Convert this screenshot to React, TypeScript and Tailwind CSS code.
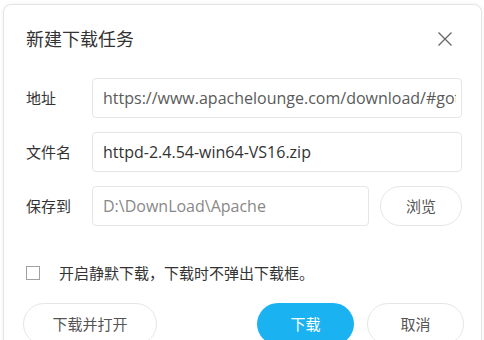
import React from "react";

const cjk = { fontFamily: '"Open Sans", "Noto Sans CJK SC", sans-serif' };

export default function App() {
  return (
    <div className="w-[484px] h-[340px] overflow-hidden bg-white" style={cjk}>
      <div className="ml-[3px] mt-[4px] w-[479px] h-[400px] rounded-[8px] border border-[#e4e4e4] bg-white shadow-[0_0_4px_rgba(0,0,0,0.06)] pl-[22px] pr-[19px] pt-[22px]">
        <div className="flex items-center h-[24px]">
          <div className="text-[18px] leading-[24px] text-[#333]">新建下载任务</div>
          <svg className="ml-auto mr-[9px]" width="16" height="16" viewBox="0 0 16 16">
            <path d="M1.5 1.5 L14.5 14.5 M14.5 1.5 L1.5 14.5" stroke="#666" strokeWidth="1.3" fill="none" />
          </svg>
        </div>
        <div className="mt-[27px] flex flex-col gap-[14px]">
          <div className="flex items-center">
            <div className="w-[66px] shrink-0 text-[15px] text-[#333]">地址</div>
            <div className="flex-1 min-w-0 h-[40px] rounded-[4px] border border-[#e6e6e6] pl-[10px] pr-[5px] flex items-center">
              <div className="flex-1 min-w-0 overflow-hidden whitespace-nowrap text-[16px] text-[#5a5a5a]">
                https://www.apachelounge.com/download/#got
              </div>
            </div>
          </div>
          <div className="flex items-center">
            <div className="w-[66px] shrink-0 text-[15px] text-[#333]">文件名</div>
            <div className="flex-1 min-w-0 h-[40px] rounded-[4px] border border-[#e6e6e6] pl-[10px] flex items-center overflow-hidden whitespace-nowrap text-[16px] text-[#333]">
              httpd-2.4.54-win64-VS16.zip
            </div>
          </div>
          <div className="flex items-center">
            <div className="w-[66px] shrink-0 text-[15px] text-[#333]">保存到</div>
            <div className="w-[277px] h-[40px] rounded-[4px] border border-[#e6e6e6] pl-[10px] flex items-center overflow-hidden whitespace-nowrap text-[16px] text-[#888]">
              D:\DownLoad\Apache
            </div>
            <div className="ml-auto w-[82px] h-[40px] rounded-full border border-[#e6e6e6] flex items-center justify-center text-[15px] text-[#555]">
              浏览
            </div>
          </div>
        </div>
        <div className="mt-[37px] flex items-center h-[20px]">
          <div className="w-[14px] h-[14px] border-[1.5px] border-[#a0a0a0] bg-white"></div>
          <div className="ml-[19px] text-[15px] text-[#333]">开启静默下载，下载时不弹出下载框。</div>
        </div>
        <div className="mt-[20px] flex items-start -ml-[3px] -mr-[2px]">
          <div className="w-[134px] h-[42px] rounded-full border border-[#e6e6e6] flex items-center justify-center text-[15px] text-[#555]">
            下载并打开
          </div>
          <div className="ml-auto w-[97px] h-[42px] rounded-full bg-[#1ab2f0] flex items-center justify-center text-[15px] text-white">
            下载
          </div>
          <div className="ml-[13px] w-[97px] h-[42px] rounded-full border border-[#e6e6e6] flex items-center justify-center text-[15px] text-[#555]">
            取消
          </div>
        </div>
      </div>
    </div>
  );
}
